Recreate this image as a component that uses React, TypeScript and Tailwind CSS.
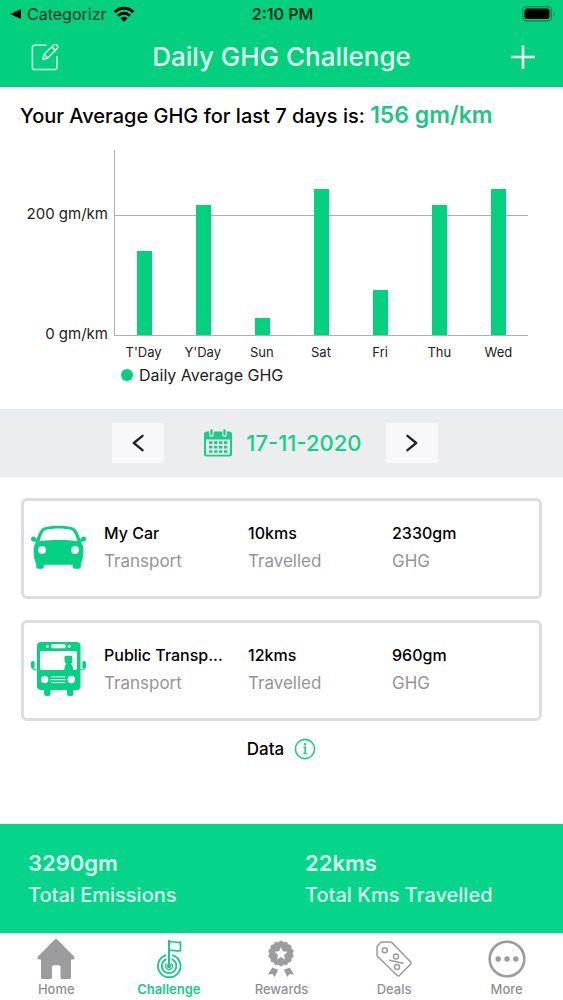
import React from "react";

const week = [
  { day: "T'Day", value: 141 },
  { day: "Y'Day", value: 219 },
  { day: "Sun", value: 29 },
  { day: "Sat", value: 245 },
  { day: "Fri", value: 75 },
  { day: "Thu", value: 219 },
  { day: "Wed", value: 245 },
];
const AXIS_MAX = 311;

function StatusBar() {
  return (
    <div className="grid h-7 grid-cols-3 items-center pr-2 pl-2.5 text-base text-[#02321c]">
      <div className="flex items-center gap-1.5">
        <svg viewBox="0 0 11 10" className="h-2.5 w-[11px] shrink-0" fill="#000" aria-hidden="true">
          <path d="M0 5 11 0v10z" />
        </svg>
        <span>Categorizr</span>
        <svg viewBox="0 0 22 16" className="h-4 w-[22px] shrink-0" aria-hidden="true">
          <g fill="none" stroke="#000" strokeWidth="2.9">
            <path d="M1.6 6.1a13.4 13.4 0 0 1 18.8 0" />
            <path d="M5 9.7a8.6 8.6 0 0 1 12 0" />
          </g>
          <path d="M7.4 12.2a5.2 5.2 0 0 1 7.2 0L11 15.8z" fill="#000" />
        </svg>
      </div>
      <span className="text-center font-semibold">2:10 PM</span>
      <svg viewBox="0 0 33 16" className="h-4 w-[33px] justify-self-end" aria-hidden="true">
        <rect x="0.7" y="0.7" width="28.6" height="14.2" rx="4" fill="none" stroke="#067f4c" strokeWidth="1.3" />
        <rect x="2.5" y="2.6" width="25" height="10.4" rx="2.2" fill="#000" />
        <path d="M31 5.4c1.8.8 1.8 4.2 0 5z" fill="#067f4c" />
      </svg>
    </div>
  );
}

function EditIcon() {
  return (
    <svg viewBox="0 0 28 28" className="size-7" fill="none" stroke="#d5ffec" strokeWidth="1.5" strokeLinecap="round" strokeLinejoin="round" aria-hidden="true">
      <path d="M15 2.2H3.8A2.4 2.4 0 0 0 1.4 4.6v19.6a2.4 2.4 0 0 0 2.4 2.4h19.8a2.4 2.4 0 0 0 2.4-2.4V13.5" />
      <path d="m11.6 16.5 1.500-5.200L22.700 2a2 2 0 0 1 2.900 0l.6.6a2 2 0 0 1 0 2.900L16.800 15z" />
      <path d="m20.800 3.900 3.500 3.500M13.100 11.300l3.700 3.700" />
    </svg>
  );
}

function CalendarIcon() {
  return (
    <svg viewBox="0 0 28 28" className="size-7 shrink-0" aria-hidden="true">
      <path fillRule="evenodd" fill="#16ce87" d="M2.500 2.500h23A2.500 2.500 0 0 1 28 5v20a2.500 2.500 0 0 1-2.500 2.500h-23A2.500 2.500 0 0 1 0 25V5a2.500 2.500 0 0 1 2.500-2.500zM2 10.500v14a1.300 1.300 0 0 0 1.300 1.300h21.400a1.300 1.300 0 0 0 1.300-1.300v-14z" />
      <g stroke="#ecedee" strokeWidth="4.600" strokeLinecap="round"><path d="M7.500 2.500v3.200M20.500 2.500v3.200" /></g>
      <g stroke="#16ce87" strokeWidth="2.300" strokeLinecap="round"><path d="M7.500 1.500v3.800M20.500 1.500v3.800" /></g>
      <g stroke="#16ce87" strokeWidth="2.600" strokeDasharray="3.400 1.600">
        <path d="M5 13.600h18.400M5 18.100h18.400M5 22.500h18.400" />
      </g>
    </svg>
  );
}

function CarIcon() {
  return (
    <svg viewBox="0 0 55 44" className="w-[55px]" aria-hidden="true">
      <path fill="#05d183" d="M13 2.500C20 .1 35 .1 42 2.500c3.500 1.500 5.500 6.500 7.500 12.200.8-2 1.800-3.200 3.200-3.200 3 0 3 5 .2 5.100l-3.300.2c2.600 3 2.900 6 2.700 10.200-.2 5.500-.9 9-2.500 11.500v3c0 1.500-.6 2.200-2 2.200h-4c-1.400 0-2-.7-2-2.200v-1.800H12.700v1.800c0 1.500-.6 2.200-2 2.200h-3.500c-1.400 0-2-.7-2-2.200v-3C3.600 36 2.900 32.500 2.700 27c-.2-4.200.1-7.200 2.700-10.200l-3.300-.2c-2.800-.1-2.800-5.100.2-5.100 1.400 0 2.400 1.200 3.200 3.200C7.500 9 9.500 4 13 2.500z" />
      <path fill="#fff" d="M14.600 5c6.400-2 19.400-2 25.800 0 2.800 1.200 4.700 6 6 11.300-8.500-1.900-29.300-1.900-37.800 0C9.900 11 11.800 6.200 14.600 5z" />
      <circle cx="11" cy="25" r="3.900" fill="#fff" />
      <circle cx="44" cy="25" r="3.900" fill="#fff" />
    </svg>
  );
}

function BusIcon() {
  return (
    <svg viewBox="0 0 55 56" className="w-[55px]" aria-hidden="true">
      <g fill="#05d183">
        <rect x="6" y="1" width="43.500" height="48" rx="4" />
        <rect x="13" y="46" width="6.500" height="9" rx="2.500" />
        <rect x="36" y="46" width="6.500" height="9" rx="2.500" />
        <rect x="0" y="20" width="3.600" height="7.600" rx="1.600" />
        <rect x="51.400" y="20" width="3.600" height="7.600" rx="1.600" />
      </g>
      <path d="M1.900 25v3.700H7M53.100 25v3.700H48" fill="none" stroke="#05d183" strokeWidth=".9" />
      <g fill="#fff">
        <rect x="20.300" y="3.300" width="14.300" height="3.900" rx="1.200" />
        <circle cx="16.500" cy="5.200" r="1.500" />
        <circle cx="38.300" cy="5.200" r="1.500" />
        <path d="M11 10h33q2 0 2 2v15q0 2-2 2H11q-2 0-2-2V12q0-2 2-2z" />
        <circle cx="13.700" cy="38.500" r="3.700" />
        <circle cx="40.300" cy="38.500" r="3.700" />
      </g>
      <path fill="#05d183" d="M33.500 16q0-1.300 1.500-1.300h5q1.300 0 1.300 1.300v4.500q0 1.500-1.500 2.200 2 1 2 3.500l.4 3.300h-9l.5-3.600q.3-2.300 2-3.200-2.200-1-2.200-3z" />
      <path d="M20 35.800h14.500M19.500 38.700h15.500M20 41.600h14.500" stroke="#fff" strokeWidth="1" />
    </svg>
  );
}

const trips = [
  { name: "My Car", distance: "10kms", ghg: "2330gm", Icon: CarIcon },
  { name: "Public Transp...", distance: "12kms", ghg: "960gm", Icon: BusIcon },
];

function Cell({ value, label }: { value: string; label: string }) {
  return (
    <div className="min-w-0">
      <p className="truncate font-medium text-black">{value}</p>
      <p className="text-[17px] text-[#959595]">{label}</p>
    </div>
  );
}

function HomeIcon() {
  return (
    <svg viewBox="0 0 38 40" className="h-10" fill="#9c9b9d" aria-hidden="true">
      <path d="M17.500.7q1.500-1.300 3 0L37 17.400q1.400 2-.7 3H34v18q0 1.600-1.600 1.600H25q-1.500 0-1.500-1.600V28q0-1.700-1.500-1.700h-5.500q-1.500 0-1.500 1.700v10.400q0 1.600-1.500 1.600H5.600Q4 40 4 38.400v-18H1.700q-2.100-1-.7-3z" />
    </svg>
  );
}

function TargetIcon() {
  return (
    <svg viewBox="0 0 26 40" className="h-10" fill="none" stroke="#18c98b" strokeWidth="1.800" strokeLinecap="round" aria-hidden="true">
      <path d="M9.500 16.300a11.300 11.300 0 1 0 7.500 0" />
      <path d="M9.800 20.400a7.300 7.300 0 1 0 6.600 0" />
      <path d="M10.500 24.600a3.500 3.500 0 1 0 5 0" strokeWidth="1.200" />
      <path d="M13 26.500V1.800" strokeWidth="2" />
      <path d="M13.800 2.900c4-.8 5.500 1.200 10.700.2v8.600c-5.200 1-6.700-1-10.700-.2" strokeWidth="1.700" strokeLinejoin="round" />
      <circle cx="13" cy="27" r="2.200" fill="#18c98b" stroke="none" />
    </svg>
  );
}

function RewardIcon() {
  const teeth = Array.from({ length: 28 }, (_, i) => {
    const r = i % 2 ? 11.4 : 12.8;
    const a = (i * Math.PI) / 14;
    return `${(14 + r * Math.sin(a)).toFixed(2)},${(13.5 - r * Math.cos(a)).toFixed(2)}`;
  }).join(" ");
  return (
    <svg viewBox="0 0 28 38" className="h-[38px]" fill="#9c9b9d" aria-hidden="true">
      <polygon points={teeth} stroke="#9c9b9d" strokeWidth="0.6" strokeLinejoin="round" />
      <path d="m5.300 27.500 5.700 2.300-3.200 7.200-2.400-3.100-4.400.6zM22.700 27.500 17 29.800l3.200 7.200 2.400-3.100 4.400.6z" />
      <path fill="#fff" d="m14 7.100 1.900 4.200 4.600.5-3.400 3.100.9 4.500-4-2.300-4 2.300.9-4.500-3.400-3.100 4.600-.5z" />
    </svg>
  );
}

function DealsIcon() {
  return (
    <svg viewBox="0 0 36 36" className="h-9" fill="none" stroke="#9c9b9d" strokeWidth="1.500" strokeLinejoin="round" strokeLinecap="round" aria-hidden="true">
      <path d="M6 1h8q1.300 0 2.200.9l18.300 18.800q1.200 1.300 0 2.600L23.700 34.300q-1.300 1.200-2.600 0L2 16q-1-1-1-2.300V6.500Q1 5.500 1.700 4.800L4.300 1.800Q5 1 6 1z" />
      <circle cx="8.800" cy="9.300" r="2.500" />
      <circle cx="20" cy="15.500" r="2.500" />
      <circle cx="21" cy="26" r="2.500" />
      <path d="m13.500 19.200 13.500 3" />
    </svg>
  );
}

function MoreIcon() {
  return (
    <svg viewBox="0 0 38 38" className="h-[38px]" fill="#9c9b9d" aria-hidden="true">
      <circle cx="19" cy="19" r="17.300" fill="none" stroke="#9c9b9d" strokeWidth="2.600" />
      <circle cx="10.200" cy="19" r="2.700" />
      <circle cx="19" cy="19" r="2.700" />
      <circle cx="27.800" cy="19" r="2.700" />
    </svg>
  );
}

const tabs = [
  { label: "Home", Icon: HomeIcon },
  { label: "Challenge", Icon: TargetIcon },
  { label: "Rewards", Icon: RewardIcon },
  { label: "Deals", Icon: DealsIcon },
  { label: "More", Icon: MoreIcon },
];

function StepButton({ label, path }: { label: string; path: string }) {
  return (
    <button type="button" aria-label={label} className="flex h-10 w-[52px] items-center justify-center bg-[#f8f8fa]">
      <svg viewBox="0 0 12 18" className="h-[18px] w-3" fill="none" stroke="#26242a" strokeWidth="2.400" strokeLinecap="round" strokeLinejoin="round" aria-hidden="true">
        <path d={path} />
      </svg>
    </button>
  );
}

export default function App() {
  return (
    <div className="flex min-h-screen flex-col bg-white font-['Inter',sans-serif] text-black">
      <header className="bg-[#03d07f]">
        <StatusBar />
        <div className="flex h-[59px] items-center justify-between px-[27px] pb-0.5">
          <button type="button" aria-label="Edit" className="flex w-8 justify-end"><EditIcon /></button>
          <h1 className="text-[26px] font-medium text-[#e0fff1]">Daily GHG Challenge</h1>
          <button type="button" aria-label="Add" className="flex w-8 justify-end">
            <svg viewBox="0 0 26 26" className="size-[26px]" stroke="#e8fff5" strokeWidth="2.600" aria-hidden="true">
              <path d="M13 1v24M1 13h24" />
            </svg>
          </button>
        </div>
      </header>

      <main className="flex flex-1 flex-col">
        <p className="px-5 pt-3 text-[20px] leading-8 font-medium whitespace-nowrap">
          Your Average GHG for last 7 days is:{" "}
          <strong className="text-[23px] font-semibold text-[#1fc586]">156 gm/km</strong>
        </p>

        <figure className="pt-[18px] pr-[35px] pb-[22px] pl-[22px] text-[15px]">
          <div className="flex">
            <div className="flex w-[92px] flex-col items-end justify-between pt-[54px] pr-1.5 whitespace-nowrap text-[#222]">
              <span className="leading-5">200 gm/km</span>
              <span className="-mb-2 leading-5">0 gm/km</span>
            </div>
            <div className="relative flex h-[186px] flex-1 items-end border-b border-l border-[#b0b0b0]">
              <div className="absolute inset-x-0 top-[65px] h-px bg-[#b0b0b0]" />
              {week.map((d) => (
                <div key={d.day} className="relative flex h-full flex-1 items-end justify-center">
                  <div className="w-[15px] bg-[#05d07f]" style={{ height: `${(d.value / AXIS_MAX) * 100}%` }} />
                </div>
              ))}
            </div>
          </div>
          <div className="flex pt-1.5 pl-[92px] text-[13px] text-[#222]">
            {week.map((d) => (
              <span key={d.day} className="flex-1 text-center leading-5">{d.day}</span>
            ))}
          </div>
          <figcaption className="flex items-center gap-1.5 pt-px pl-[99px] text-[16px] leading-6 text-[#222]">
            <span className="size-3 rounded-full bg-[#05d07f]" />
            Daily Average GHG
          </figcaption>
        </figure>

        <div className="flex h-[68px] items-center justify-center gap-6 bg-[#ecedee] pr-3.5">
          <StepButton label="Previous day" path="M10.500 1.800 1.800 9l8.700 7.200" />
          <button type="button" className="flex w-[174px] items-center justify-end gap-3.5 text-[22px] font-medium whitespace-nowrap text-[#16ce87]">
            <CalendarIcon />
            17-11-2020
          </button>
          <StepButton label="Next day" path="M1.500 1.800 10.200 9l-8.700 7.200" />
        </div>

        <ul className="flex flex-col gap-[21px] px-[21px] pt-[21px]">
          {trips.map(({ name, distance, ghg, Icon }) => (
            <li key={name} className="flex rounded-md border-[3px] border-[#dddde0] pt-[18px] pr-[3px] pb-[21px] pl-[7px] text-base leading-7">
              <div className="flex w-[73px] shrink-0 items-center"><Icon /></div>
              <div className="grid flex-1 grid-cols-3">
                <Cell value={name} label="Transport" />
                <Cell value={distance} label="Travelled" />
                <Cell value={ghg} label="GHG" />
              </div>
            </li>
          ))}
        </ul>

        <div className="flex items-center justify-center gap-2.5 pt-4 pb-8 text-[17px] leading-6 font-medium">
          Data
          <button type="button" aria-label="About this data">
            <svg viewBox="0 0 22 22" className="size-[22px]" fill="none" stroke="#25c891" strokeWidth="1.600" aria-hidden="true">
              <circle cx="11" cy="11" r="9.600" />
              <path d="M9.500 9.300h1.700v6.500M9.300 15.500h3.800" />
              <circle cx="11" cy="6.300" r="1.200" fill="#25c891" stroke="none" />
            </svg>
          </button>
        </div>
      </main>

      <section aria-label="Totals" className="grid h-[109px] grid-cols-2 content-center gap-x-[19px] bg-[#05d58a] pl-7 text-[#d9ffee]">
        <div>
          <p className="text-[22px] leading-8 font-semibold">3290gm</p>
          <p className="text-[20px] leading-8 font-medium">Total Emissions</p>
        </div>
        <div>
          <p className="text-[22px] leading-8 font-semibold">22kms</p>
          <p className="text-[20px] leading-8 font-medium">Total Kms Travelled</p>
        </div>
      </section>

      <nav className="grid h-[67px] grid-cols-5">
        {tabs.map(({ label, Icon }) => {
          const active = label === "Challenge";
          return (
            <a
              key={label}
              href={`#${label.toLowerCase()}`}
              aria-current={active ? "page" : undefined}
              className={active ? "flex flex-col items-center pt-1.5 text-[13px] font-semibold text-[#18c98b]" : "flex flex-col items-center pt-1.5 text-[13px] font-medium text-[#919093]"}
            >
              <span className="flex h-10 items-center"><Icon /></span>
              <span className="leading-5">{label}</span>
            </a>
          );
        })}
      </nav>
    </div>
  );
}
